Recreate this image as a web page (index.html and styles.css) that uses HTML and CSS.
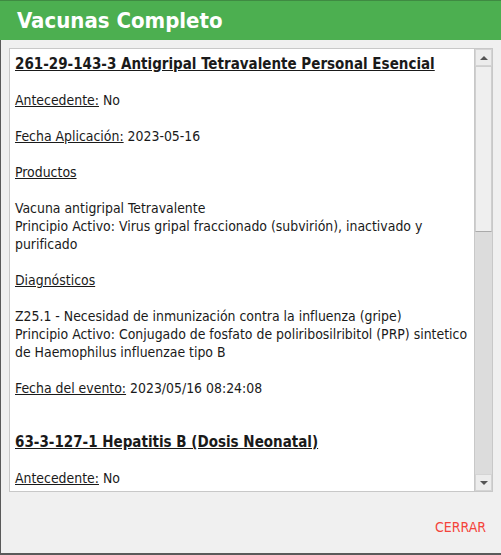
FILE: index.html
```html
<!DOCTYPE html>
<html lang="es">
<head>
<meta charset="utf-8">
<title>Vacunas Completo</title>
<link rel="stylesheet" href="styles.css">
</head>
<body>
<div class="window">
  <header class="titlebar">Vacunas Completo</header>
  <main class="body">
    <div class="panel">
      <div class="content">
        <p class="vac-title">261-29-143-3 Antigripal Tetravalente Personal Esencial</p>
        <p><span class="lbl">Antecedente:</span> No</p>
        <p><span class="lbl">Fecha Aplicación:</span> 2023-05-16</p>
        <p><span class="lbl">Productos</span></p>
        <p>Vacuna antigripal Tetravalente<br>Principio Activo: Virus gripal fraccionado (subvirión), inactivado y purificado</p>
        <p><span class="lbl">Diagnósticos</span></p>
        <p>Z25.1 - Necesidad de inmunización contra la influenza (gripe)<br>Principio Activo: Conjugado de fosfato de poliribosilribitol (PRP) sintetico de Haemophilus influenzae tipo B</p>
        <p><span class="lbl">Fecha del evento:</span> 2023/05/16 08:24:08</p>
        <p class="vac-title second">63-3-127-1 Hepatitis B (Dosis Neonatal)</p>
        <p class="last"><span class="lbl">Antecedente:</span> No</p>
      </div>
      <div class="scrollbar">
        <div class="sb-btn"><span class="arrow up"></span></div>
        <div class="sb-track"><div class="sb-thumb"></div></div>
        <div class="sb-btn"><span class="arrow down"></span></div>
      </div>
    </div>
  </main>
  <footer class="actions">
    <button class="btn-close" type="button">CERRAR</button>
  </footer>
</div>
</body>
</html>
```
FILE: styles.css
```css
html, body {
  margin: 0;
  padding: 0;
}
body {
  width: 501px;
  height: 555px;
  overflow: hidden;
  background: #f0f0f0;
  font-family: "DejaVu Sans Condensed", "DejaVu Sans", sans-serif;
  color: #1a1a1a;
}
.window {
  display: flex;
  flex-direction: column;
  width: 501px;
  height: 555px;
  box-sizing: border-box;
  border-left: 1px solid #5a5a5a;
  border-bottom: 2px solid #5a5a5a;
  background: #f0f0f0;
}
.titlebar {
  height: 39px;
  margin-left: -1px;
  border-top: 1px solid #3f8a42;
  background: #4caf50;
  color: #fff;
  font-weight: bold;
  font-size: 22px;
  line-height: 40px;
  padding-left: 17px;
}
.body {
  padding: 8px 8px 0 8px;
}
.panel {
  display: flex;
  height: 444px;
  box-sizing: border-box;
  border: 1px solid #c8c8c8;
  background: #fff;
}
.content {
  flex: 1;
  overflow: hidden;
  padding: 6px 2px 0 5px;
  font-size: 13.9px;
  line-height: 18px;
}
.content p {
  margin: 0 0 18px 0;
}
.content p.last {
  margin-bottom: 0;
}
.vac-title {
  font-weight: bold;
  text-decoration: underline;
  font-size: 15px;
}
.vac-title.second {
  margin-top: 36px;
}
.lbl {
  text-decoration: underline;
}
.scrollbar {
  width: 17px;
  display: flex;
  flex-direction: column;
  background: #dcdcdc;
  border-left: 1px solid #c8c8c8;
}
.sb-btn {
  height: 17px;
  background: #ececec;
  border: 1px solid #d4d4d4;
  box-sizing: border-box;
  display: flex;
  align-items: center;
  justify-content: center;
}
.sb-track {
  flex: 1;
  background: #dcdcdc;
}
.sb-thumb {
  height: 166px;
  background: #efefef;
  border: 1px solid #cfcfcf;
  border-bottom-color: #aaa;
  box-sizing: border-box;
}
.arrow {
  width: 0;
  height: 0;
  border-left: 4px solid transparent;
  border-right: 4px solid transparent;
}
.arrow.up {
  border-bottom: 4px solid #555;
}
.arrow.down {
  border-top: 4px solid #555;
}
.actions {
  flex: 1;
  display: flex;
  justify-content: flex-end;
  align-items: center;
  padding-right: 15px;
}
.btn-close {
  border: 0;
  background: transparent;
  color: #f4433a;
  font-family: "DejaVu Sans Condensed", "DejaVu Sans", sans-serif;
  font-size: 14px;
  padding: 0;
  margin-top: 8px;
}
```
